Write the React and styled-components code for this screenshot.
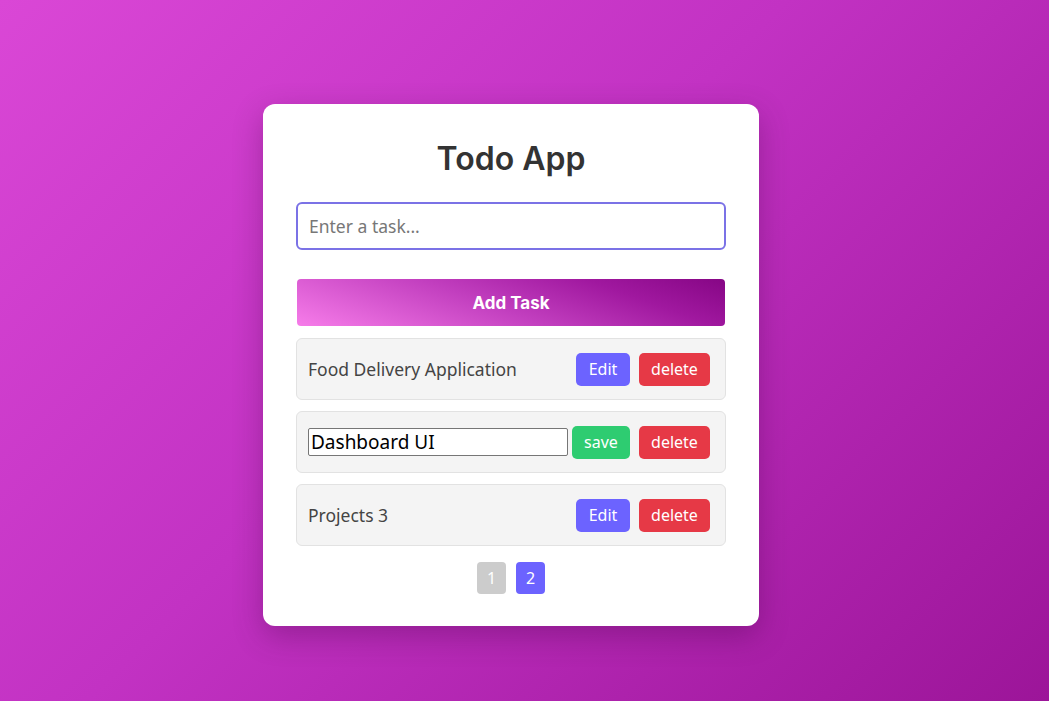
import React, { useState } from 'react';
import styled, { createGlobalStyle } from 'styled-components';

const Global = createGlobalStyle`
    * { box-sizing: border-box; }
    html, body { margin: 0; height: 100%; }
    body {
        font-family: 'Noto Sans', 'Open Sans', sans-serif;
        background: linear-gradient(135deg, #da47d6 0%, #c232c3 45%, #9c1599 100%);
        background-attachment: fixed;
    }
`;

const Page = styled.div`
    min-height: 100vh;
    padding: 29px 27px 0 0;
    display: flex;
    justify-content: center;
    align-items: center;
`;

const Card = styled.div`
    width: 496px;
    background: #fff;
    border-radius: 12px;
    padding: 35px 33px 32px 33px;
    box-shadow: 0 10px 30px rgba(60, 0, 60, 0.3);
    display: flex;
    flex-direction: column;
`;

const Title = styled.h1`
    margin: 0 0 23px;
    font-family: Inter, 'Noto Sans', sans-serif;
    font-size: 32px;
    line-height: 40px;
    font-weight: 600;
    color: #333;
    text-align: center;
`;

const TaskInput = styled.input`
    height: 48px;
    width: 100%;
    border: 2px solid #7b72e6;
    border-radius: 6px;
    padding: 0 11px;
    font-family: 'Noto Sans', sans-serif;
    font-size: 17.5px;
    color: #333;
    outline: none;
    &::placeholder { color: #777; }
`;

const AddButton = styled.button`
    margin: 29px 1px 12px;
    height: 47px;
    border: none;
    border-radius: 4px;
    background: linear-gradient(20deg, #f67ce9 0%, #c23fbf 45%, #a0189f 75%, #860685 100%);
    color: #fff;
    font-family: Inter, sans-serif;
    font-size: 17px;
    font-weight: 700;
    cursor: pointer;
`;

const List = styled.ul`
    list-style: none;
    margin: 0;
    padding: 0;
    display: flex;
    flex-direction: column;
    gap: 11px;
`;

const Item = styled.li`
    height: 62px;
    display: flex;
    align-items: center;
    gap: 9px;
    padding: 0 15px 0 11px;
    background: #f4f4f4;
    border: 1px solid #e2e2e2;
    border-radius: 6px;
`;

const ItemText = styled.span`
    flex: 1;
    font-size: 17.5px;
    color: #444;
`;

const EditInput = styled.input`
    flex: 1;
    min-width: 0;
    height: 28px;
    margin-right: -5px;
    border: 1px solid #767676;
    border-radius: 2px;
    padding: 0 2px;
    font-family: 'Noto Sans', sans-serif;
    font-size: 19px;
    color: #000;
    background: #fff;
`;

const colors = { edit: '#6c63ff', save: '#2ecc71', delete: '#e63946' };

const ActionButton = styled.button`
    flex-shrink: 0;
    height: 33px;
    width: ${p => (p.$kind === 'delete' ? '71px' : p.$kind === 'save' ? '58px' : '54px')};
    border: none;
    border-radius: 5px;
    background: ${p => colors[p.$kind]};
    color: #fff;
    font-family: 'Noto Sans', sans-serif;
    font-size: 16px;
    cursor: pointer;
`;

const Pager = styled.div`
    margin-top: 16px;
    display: flex;
    justify-content: center;
    gap: 10px;
`;

const PageButton = styled.button`
    height: 32px;
    min-width: 29px;
    padding: 0 9px;
    border: none;
    border-radius: 4px;
    background: ${p => (p.$active ? '#6c63ff' : '#cccccc')};
    color: #fff;
    font-family: 'Noto Sans', sans-serif;
    font-size: 16px;
`;

const App = () => {
    const [task, setTask] = useState('');
    const [editText, setEditText] = useState('Dashboard UI');
    const items = [
        { id: 1, text: 'Food Delivery Application' },
        { id: 2, text: 'Dashboard UI', editing: true },
        { id: 3, text: 'Projects 3' },
    ];

    return (
        <Page>
            <Global />
            <Card>
                <Title>Todo App</Title>
                <TaskInput
                    placeholder="Enter a task..."
                    value={task}
                    onChange={e => setTask(e.target.value)}
                />
                <AddButton>Add Task</AddButton>
                <List>
                    {items.map(item => (
                        <Item key={item.id}>
                            {item.editing ? (
                                <EditInput value={editText} onChange={e => setEditText(e.target.value)} />
                            ) : (
                                <ItemText>{item.text}</ItemText>
                            )}
                            <ActionButton $kind={item.editing ? 'save' : 'edit'}>
                                {item.editing ? 'save' : 'Edit'}
                            </ActionButton>
                            <ActionButton $kind="delete">delete</ActionButton>
                        </Item>
                    ))}
                </List>
                <Pager>
                    <PageButton>1</PageButton>
                    <PageButton $active>2</PageButton>
                </Pager>
            </Card>
        </Page>
    );
};

export default App;
